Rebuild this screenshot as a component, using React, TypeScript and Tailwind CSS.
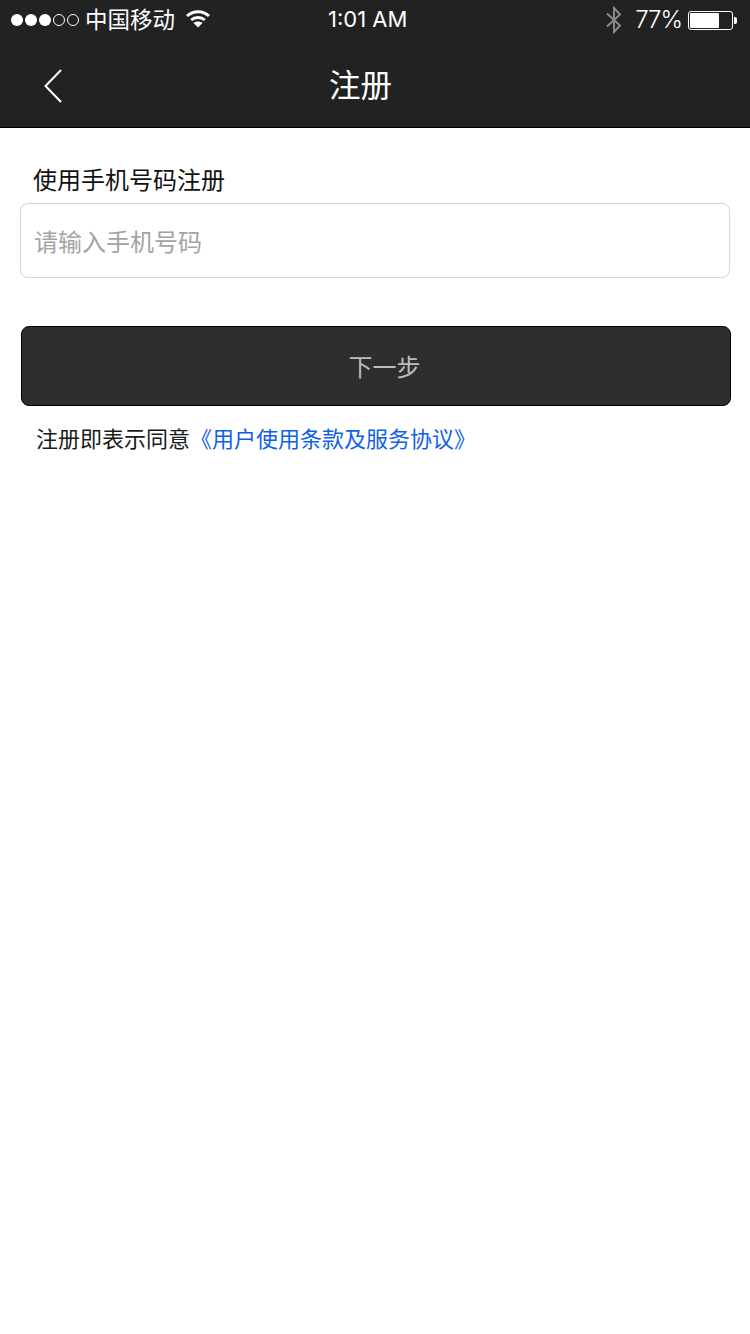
import React from "react";

const cjk = "font-['Inter','Noto_Sans_CJK_SC',sans-serif]";

function Signal() {
  return (
    <div className="flex items-center gap-[2px]">
      {[0, 1, 2].map((i) => (
        <span key={i} className="w-[12px] h-[12px] rounded-full bg-white" />
      ))}
      {[0, 1].map((i) => (
        <span key={i} className="w-[12px] h-[12px] rounded-full border border-white" />
      ))}
    </div>
  );
}

function Wifi() {
  return (
    <svg width="26" height="20" viewBox="0 0 26 20" fill="none" stroke="white" strokeWidth="3">
      <path d="M2 7C8 1.3 18 1.3 24 7" />
      <path d="M6.2 11C10 7.5 16 7.5 19.8 11" />
      <path d="M8.5 14L13 18.6L17.5 14C15 12 11 12 8.5 14Z" fill="white" stroke="none" />
    </svg>
  );
}

function Bluetooth() {
  return (
    <svg width="18" height="28" viewBox="0 0 18 28" fill="none" stroke="#8a8a8a" strokeWidth="2">
      <path d="M2 7.5L15 19.5L9 26V2L15 8.5L2 20.5" />
    </svg>
  );
}

function Battery() {
  return (
    <div className="flex items-center gap-[1px]">
      <div className="w-[45px] h-[19px] rounded-[3px] border border-white p-[1px]">
        <div className="w-[29px] h-full rounded-[1px] bg-white" />
      </div>
      <div className="w-[3px] h-[7px] rounded-r-[2px] bg-white" />
    </div>
  );
}

export default function App() {
  return (
    <div className={`w-[750px] h-[1334px] bg-white ${cjk}`}>
      <div className="h-[128px] bg-[#222222] border-b border-black text-white">
        <div className="h-[40px] flex items-center pl-[11px] pr-[13px]">
          <div className="w-[271px] flex items-center">
            <Signal />
            <span className="ml-[6px] text-[22.5px] leading-none">中国移动</span>
            <span className="ml-[10px] -mt-[3px]">
              <Wifi />
            </span>
          </div>
          <span className="ml-[46px] -mt-[2px] text-[22px] leading-none">1:01 AM</span>
          <div className="ml-auto flex items-center">
            <Bluetooth />
            <span className="ml-[12px] text-[24px] leading-none font-light tracking-[-1px]">77%</span>
            <span className="ml-[6px]">
              <Battery />
            </span>
          </div>
        </div>
        <div className="h-[87px] flex items-center pt-[4px] pl-[43px]">
          <svg width="20" height="36" viewBox="0 0 20 36" fill="none" stroke="white" strokeWidth="2" className="shrink-0">
            <path d="M18 2L2.5 18L18 34" />
          </svg>
          <h1 className="ml-[266px] text-[31.5px] leading-none font-normal">注册</h1>
        </div>
      </div>

      <div className="pt-[38px] pl-[20px] pr-[20px]">
        <div className="pl-[13px] text-[24px] leading-[30px] text-[#111111]">使用手机号码注册</div>
        <input
          placeholder="请输入手机号码"
          className="mt-[7px] block w-[710px] h-[75px] rounded-[8px] border border-[#d4d4d4] pl-[13px] pt-[3px] text-[24px] outline-none placeholder:text-[#a3a3a3]"
        />
        <button className="mt-[48px] ml-[1px] flex items-center justify-center w-[710px] h-[80px] rounded-[8px] border border-black bg-[#2e2e2e] pl-[17px] pt-[3px] text-[24px] text-[#bdbdbd]">
          下一步
        </button>
        <p className="mt-[18px] pl-[16px] text-[22px] leading-[30px] text-[#1a1a1a]">
          注册即表示同意<span className="text-[#0f5fe8]">《用户使用条款及服务协议》</span>
        </p>
      </div>
    </div>
  );
}
